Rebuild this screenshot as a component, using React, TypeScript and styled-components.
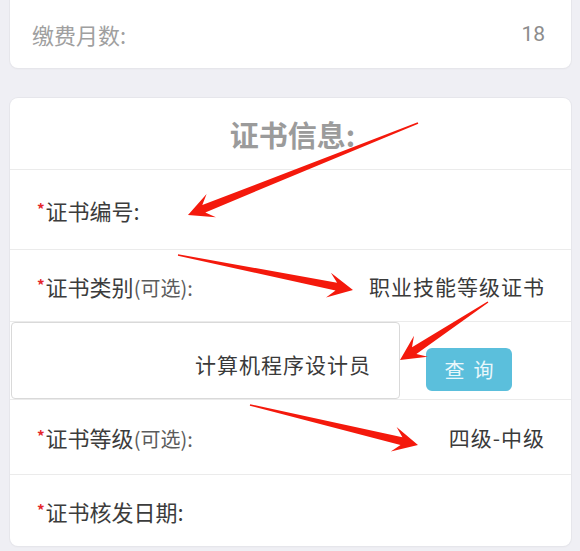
import React from "react";
import styled, { createGlobalStyle } from "styled-components";

const GlobalStyle = createGlobalStyle`
  html, body {
    margin: 0;
    padding: 0;
    background: #efeff4;
    font-family: "Noto Sans CJK SC", "Noto Sans", sans-serif;
  }
  * { box-sizing: border-box; }
`;

const Screen = styled.div`
  position: relative;
  width: 580px;
  height: 551px;
  overflow: hidden;
  background: #efeff4;
`;

const Page = styled.div`
  display: flex;
  flex-direction: column;
  gap: 30px;
  padding: 0 9px 0 10px;
`;

const TopCard = styled.div`
  height: 68px;
  background: #fff;
  border-radius: 0 0 8px 8px;
  box-shadow: 0 0 0 1px #e6e6eb, 0 1px 2px rgba(0, 0, 0, 0.05);
  display: flex;
  align-items: center;
  justify-content: space-between;
  padding: 0 26px 0 22px;
`;

const MutedLabel = styled.span`
  font-size: 22px;
  color: #a0a0a0;
`;

const MutedValue = styled.span`
  font-family: Roboto, "Noto Sans", sans-serif;
  font-size: 21px;
  color: #8c8c8c;
`;

const Card = styled.div`
  background: #fff;
  border-radius: 8px;
  overflow: hidden;
  box-shadow: 0 0 0 1px #e6e6eb, 0 1px 2px rgba(0, 0, 0, 0.05);
`;

const TitleRow = styled.div`
  height: 72px;
  display: flex;
  align-items: center;
  justify-content: center;
  border-bottom: 1px solid #ebebeb;
  font-size: 29px;
  font-weight: 700;
  color: #9b9b9b;
  padding-left: 4px;
`;

const Row = styled.div<{ $h: number; $last?: boolean }>`
  height: ${(p) => p.$h}px;
  display: flex;
  align-items: center;
  justify-content: space-between;
  padding: 0 26px 0 27px;
  border-bottom: ${(p) => (p.$last ? "none" : "1px solid #ebebeb")};
`;

const Label = styled.span`
  font-size: 22px;
  color: #3c3c3c;
  white-space: nowrap;
`;

const Star = styled.span`
  color: #e5262b;
  font-size: 15px;
  font-weight: 700;
  vertical-align: 5px;
  margin-right: 1px;
`;

const Optional = styled.span`
  font-size: 20px;
  color: #5c5c5c;
`;

const Value = styled.span`
  font-size: 21px;
  letter-spacing: 1px;
  color: #3a3a3a;
  white-space: nowrap;
`;

const InputRow = styled.div`
  height: 78px;
  display: flex;
  align-items: stretch;
  gap: 26px;
  padding-left: 1px;
  border-bottom: 1px solid #ebebeb;
`;

const InputBox = styled.div`
  width: 389px;
  border: 1px solid #d9d9d9;
  border-radius: 4px;
  background: #fff;
  display: flex;
  align-items: center;
  justify-content: flex-end;
  padding: 6px 28px 0 0;
  font-size: 21px;
  letter-spacing: 1px;
  color: #3a3a3a;
`;

const QueryButton = styled.button`
  align-self: center;
  margin-top: 17px;
  width: 86px;
  height: 43px;
  border: none;
  border-radius: 6px;
  background: #5bbfdc;
  color: #eaf7fb;
  font-family: "Noto Sans CJK SC", sans-serif;
  font-size: 20px;
  letter-spacing: 9px;
  padding: 0 0 0 9px;
`;

const Overlay = styled.svg`
  position: absolute;
  left: 0;
  top: 0;
  pointer-events: none;
`;

type Arrow = [number, number, number, number];

const arrows: Arrow[] = [
  [418, 123, 188, 215],
  [178, 255, 353, 290],
  [488, 302, 400, 360],
  [250, 405, 418, 445],
];

function arrowPoints([tx, ty, hx, hy]: Arrow): string {
  const dx = hx - tx;
  const dy = hy - ty;
  const L = Math.hypot(dx, dy);
  const ux = dx / L;
  const uy = dy / L;
  const nx = -uy;
  const ny = ux;
  const tailW = 1.5;
  const neckW = 8;
  const headLen = 25;
  const headHalf = 12.5;
  const neckBack = 17;
  const nkx = hx - ux * neckBack;
  const nky = hy - uy * neckBack;
  const bx = hx - ux * headLen;
  const by = hy - uy * headLen;
  const pts = [
    [tx + (nx * tailW) / 2, ty + (ny * tailW) / 2],
    [nkx + (nx * neckW) / 2, nky + (ny * neckW) / 2],
    [bx + nx * headHalf, by + ny * headHalf],
    [hx, hy],
    [bx - nx * headHalf, by - ny * headHalf],
    [nkx - (nx * neckW) / 2, nky - (ny * neckW) / 2],
    [tx - (nx * tailW) / 2, ty - (ny * tailW) / 2],
  ];
  return pts.map((p) => `${p[0].toFixed(1)},${p[1].toFixed(1)}`).join(" ");
}

export default function App() {
  return (
    <>
      <GlobalStyle />
      <Screen>
        <Page>
          <TopCard>
            <MutedLabel>缴费月数:</MutedLabel>
            <MutedValue>18</MutedValue>
          </TopCard>
          <Card>
            <TitleRow>证书信息:</TitleRow>
            <Row $h={80}>
              <Label>
                <Star>*</Star>证书编号:
              </Label>
            </Row>
            <Row $h={72}>
              <Label>
                <Star>*</Star>证书类别<Optional>(可选):</Optional>
              </Label>
              <Value>职业技能等级证书</Value>
            </Row>
            <InputRow>
              <InputBox>计算机程序设计员</InputBox>
              <QueryButton type="button">查询</QueryButton>
            </InputRow>
            <Row $h={75}>
              <Label>
                <Star>*</Star>证书等级<Optional>(可选):</Optional>
              </Label>
              <Value>四级-中级</Value>
            </Row>
            <Row $h={71} $last>
              <Label>
                <Star>*</Star>证书核发日期:
              </Label>
            </Row>
          </Card>
        </Page>
        <Overlay width={580} height={551} viewBox="0 0 580 551">
          {arrows.map((a, i) => (
            <polygon key={i} points={arrowPoints(a)} fill="#f4190c" />
          ))}
        </Overlay>
      </Screen>
    </>
  );
}
